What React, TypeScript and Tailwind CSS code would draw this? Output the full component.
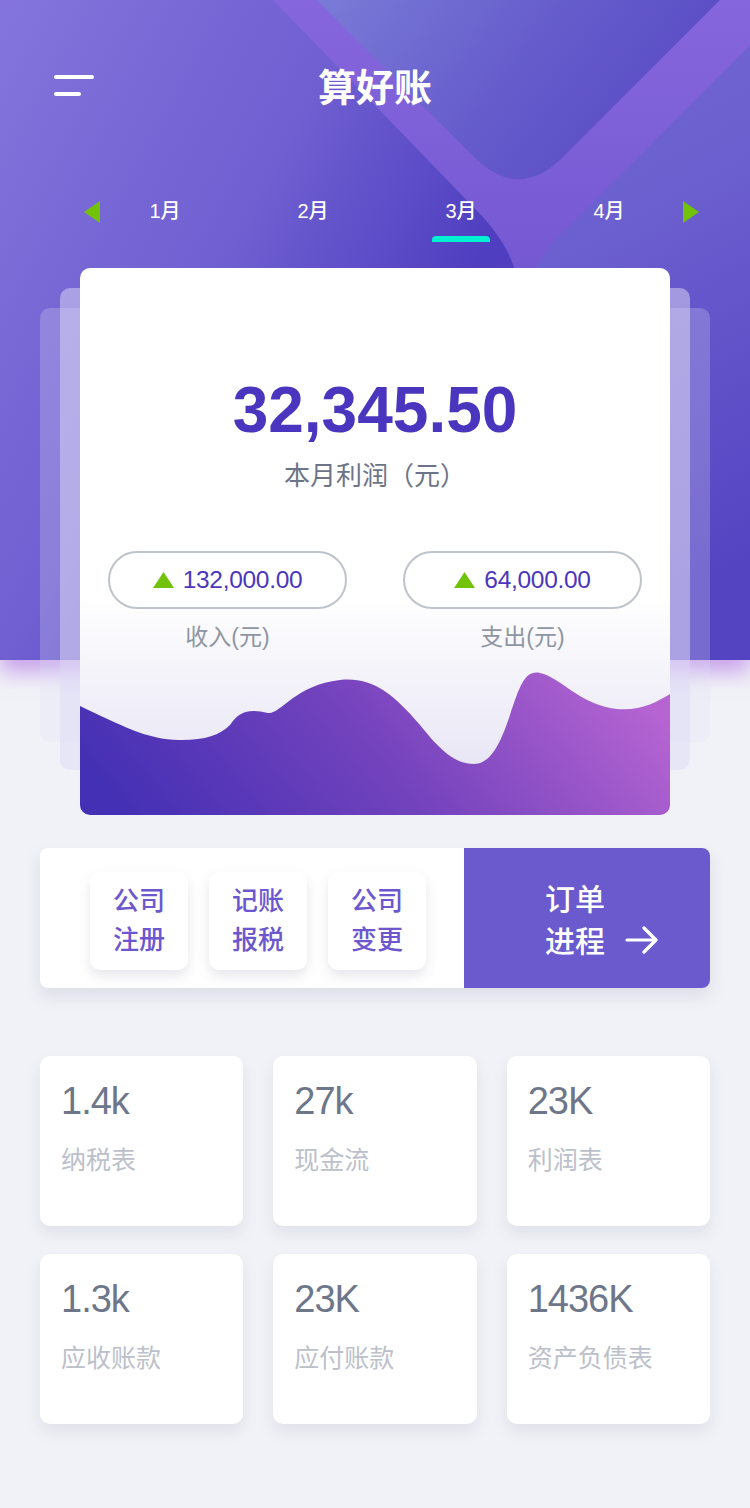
import { useState } from 'react';

const months = ['1月', '2月', '3月', '4月'];

const services = [
  ['公司', '注册'],
  ['记账', '报税'],
  ['公司', '变更'],
];

const stats = [
  { value: '1.4k', label: '纳税表' },
  { value: '27k', label: '现金流' },
  { value: '23K', label: '利润表' },
  { value: '1.3k', label: '应收账款' },
  { value: '23K', label: '应付账款' },
  { value: '1436K', label: '资产负债表' },
];

function HeaderArt() {
  return (
    <svg className="absolute inset-0 h-full w-full" viewBox="0 0 750 660" preserveAspectRatio="none">
      <defs>
        <linearGradient id="band" x1="0" y1="0" x2="0" y2="1">
          <stop offset="0" stopColor="#8666dc" />
          <stop offset="0.4" stopColor="#7559d3" />
          <stop offset="1" stopColor="#6a55cc" />
        </linearGradient>
        <linearGradient id="side" x1="0" y1="0" x2="0.2" y2="1">
          <stop offset="0" stopColor="#7168d3" />
          <stop offset="0.35" stopColor="#6c5fcf" />
          <stop offset="1" stopColor="#5544c2" />
        </linearGradient>
        <linearGradient id="inner" x1="0" y1="0" x2="1" y2="0.35">
          <stop offset="0" stopColor="#7a7bd7" />
          <stop offset="0.55" stopColor="#665dcc" />
          <stop offset="1" stopColor="#5a4bc5" />
        </linearGradient>
      </defs>
      {/* big rotated frame behind the title */}
      <path d="M273 0 L482 216 C505 242 516 262 522 300 L522 660 L750 660 L750 0 Z" fill="url(#band)" />
      <path d="M750 45 L562 233 C540 256 530 275 528 300 L528 660 L750 660 Z" fill="url(#side)" />
      <path d="M317 0 L474 157 Q518.5 201.5 563 157 L720 0 Z" fill="url(#inner)" />
    </svg>
  );
}

function Triangle({ dir }: { dir: 'left' | 'right' }) {
  return (
    <svg width="16" height="22" viewBox="0 0 16 22" className="mt-[5px] shrink-0">
      {dir === 'left' ? <path d="M16 0 L0 11 L16 22 Z" fill="#72c20a" /> : <path d="M0 0 L16 11 L0 22 Z" fill="#72c20a" />}
    </svg>
  );
}

function UpMark() {
  return (
    <svg width="21" height="16" viewBox="0 0 21 16" className="shrink-0">
      <path d="M10.5 0 L21 16 L0 16 Z" fill="#72c20a" />
    </svg>
  );
}

function Wave() {
  return (
    <svg className="block h-[150px] w-full" viewBox="0 0 590 150" preserveAspectRatio="none">
      <defs>
        <linearGradient id="wave" x1="0" y1="0.6" x2="1" y2="0.4">
          <stop offset="0" stopColor="#4430b4" />
          <stop offset="0.5" stopColor="#7443bd" />
          <stop offset="1" stopColor="#b564d2" />
        </linearGradient>
      </defs>
      <path
        d="M0 41 C40 60 70 76 102 75 C125 75 140 70 150 60 C160 45 170 44 188 48 C200 50 215 20 260 15 C290 12 310 25 340 60 C360 85 375 99 394 99 C410 99 420 80 430 50 C440 20 445 5 460 8 C480 12 500 40 537 44 C560 46 575 38 590 29 L590 150 L0 150 Z"
        fill="url(#wave)"
      />
    </svg>
  );
}

export default function App() {
  const [month, setMonth] = useState(2);

  return (
    <div className="relative min-h-[1508px] bg-[#f1f2f7] font-['Liberation_Sans','Noto_Sans_CJK_SC',sans-serif] overflow-hidden">
      {/* header background */}
      <div className="absolute inset-x-0 top-0 h-[660px] bg-[linear-gradient(118deg,#8474dc_0%,#6f5fd1_33%,#4f3fc0_56%,#5645c3_100%)] shadow-[0_12px_20px_rgba(165,95,225,0.55)]">
        <HeaderArt />
      </div>

      <div className="relative">
        {/* top bar */}
        <div className="grid grid-cols-3 px-[54px] pt-[64px]">
          <div className="mt-[11px] flex flex-col gap-[13px]">
            <span className="block h-[4px] w-[40px] rounded-full bg-white" />
            <span className="block h-[4px] w-[27px] rounded-full bg-white" />
          </div>
          <h1 className="text-center text-[38px] font-bold leading-[48px] text-white">算好账</h1>
          <div />
        </div>

        {/* month tabs */}
        <div className="mt-[84px] flex items-start pl-[84px]">
          <Triangle dir="left" />
          <div className="ml-[-9px] flex">
            {months.map((m, i) => (
              <button key={m} onClick={() => setMonth(i)} className="flex w-[148px] flex-col items-center">
                <span className="text-[20px] font-medium leading-[30px] text-white">{m}</span>
                <span className={i === month ? 'mt-[10px] h-[6px] w-[58px] rounded-t-[4px] bg-[#00f0d2]' : 'mt-[10px] h-[6px] w-[58px]'} />
              </button>
            ))}
          </div>
          <Triangle dir="right" />
        </div>

        {/* profit card stack */}
        <div className="relative mx-[80px] mt-[26px]">
          <div className="absolute -left-[40px] -right-[40px] top-[40px] bottom-[73px] rounded-[10px] bg-[rgba(225,222,246,0.25)]" />
          <div className="absolute -left-[20px] -right-[20px] top-[20px] bottom-[45px] rounded-[10px] bg-[rgba(222,218,246,0.5)]" />
          <div className="relative overflow-hidden rounded-[10px] bg-[linear-gradient(180deg,#ffffff_0%,#ffffff_60%,#e2dff2_100%)]">
            <div className="pt-[107px] text-center">
              <div className="text-[64px] font-bold leading-[70px] text-[#4a36be]">32,345.50</div>
              <div className="mt-[13px] text-[26px] leading-[36px] text-[#6d7487]">本月利润（元）</div>
            </div>
            <div className="mt-[57px] flex justify-between px-[28px]">
              {[
                ['132,000.00', '收入(元)'],
                ['64,000.00', '支出(元)'],
              ].map(([v, l]) => (
                <div key={l} className="flex w-[239px] flex-col items-center">
                  <div className="flex h-[58px] w-full items-center justify-center gap-[9px] rounded-full border-2 border-[#bfc3cb] bg-white">
                    <UpMark />
                    <span className="text-[24.5px] leading-none tracking-[-0.3px] text-[#4b37bd]">{v}</span>
                  </div>
                  <div className="mt-[13px] text-[23px] leading-[30px] text-[#8e95a3]">{l}</div>
                </div>
              ))}
            </div>
            <div className="mt-[13px]">
              <Wave />
            </div>
          </div>
        </div>

        {/* services */}
        <div className="mx-[40px] mt-[33px] flex h-[140px] overflow-hidden rounded-[8px] bg-white shadow-[0_8px_16px_rgba(140,140,170,0.2)]">
          <div className="flex w-[424px] items-center gap-[21px] pl-[50px] pt-[6px]">
            {services.map(([a, b], i) => (
              <div
                key={i}
                className="flex h-[98px] w-[98px] flex-col items-center justify-center rounded-[10px] bg-white text-[26px] font-medium leading-[39px] text-[#6c57cf] shadow-[0_6px_12px_rgba(120,120,150,0.18)]"
              >
                <span>{a}</span>
                <span>{b}</span>
              </div>
            ))}
          </div>
          <div className="flex flex-1 items-center bg-[#6b5acd] pl-[81px] pt-[6px]">
            <div className="flex items-end gap-[20px]">
              <div className="flex flex-col text-[30px] font-medium leading-[42px] text-white">
                <span>订单</span>
                <span>进程</span>
              </div>
              <svg width="34" height="28" viewBox="0 0 34 28" className="mb-[9px]">
                <path d="M2 14 H31 M19 2 L31 14 L19 26" fill="none" stroke="white" strokeWidth="3.2" strokeLinecap="round" strokeLinejoin="round" />
              </svg>
            </div>
          </div>
        </div>

        {/* stats */}
        <div className="mx-[40px] mt-[68px] grid grid-cols-3 gap-x-[30px] gap-y-[28px]">
          {stats.map((s) => (
            <div key={s.label} className="h-[170px] rounded-[10px] bg-white pl-[21px] pt-[23px] shadow-[0_8px_14px_rgba(150,155,180,0.18)]">
              <div className="text-[38px] leading-[44px] tracking-[-1px] text-[#6e768a]">{s.value}</div>
              <div className="mt-[21px] text-[25px] leading-[32px] text-[#bcc0ca]">{s.label}</div>
            </div>
          ))}
        </div>
      </div>
    </div>
  );
}
